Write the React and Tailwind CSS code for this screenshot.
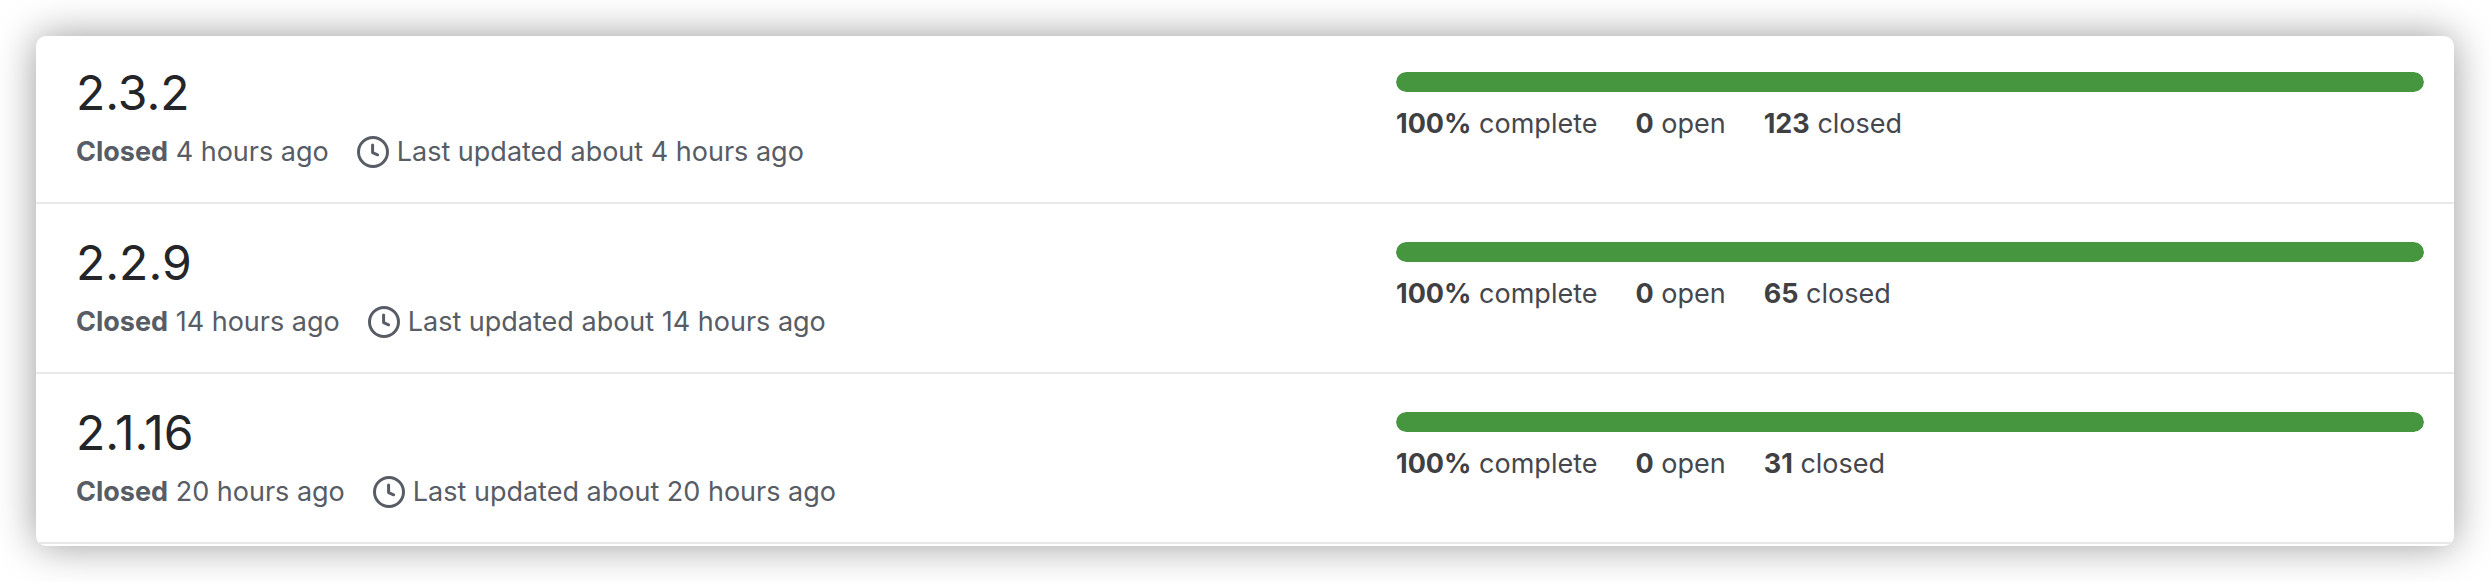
const milestones = [
  { title: "2.3.2", age: "4 hours ago", complete: 100, open: 0, closed: 123 },
  { title: "2.2.9", age: "14 hours ago", complete: 100, open: 0, closed: 65 },
  { title: "2.1.16", age: "20 hours ago", complete: 100, open: 0, closed: 31 },
];

function ClockIcon() {
  return (
    <svg viewBox="0 0 32 32" className="size-8 shrink-0" fill="none" stroke="currentColor" aria-hidden="true">
      <circle cx="16" cy="16" r="14.5" strokeWidth="3" />
      <path d="M15.6 9v7.6l5 2.2" strokeWidth="3" strokeLinecap="round" strokeLinejoin="round" />
    </svg>
  );
}

function Stat({ value, label }) {
  return (
    <span className="whitespace-nowrap">
      <strong className="font-bold text-[#3f4043]">{value}</strong> {label}
    </span>
  );
}

function Milestone({ title, age, complete, open, closed }) {
  return (
    <li className="grid grid-cols-[1320fr_1028fr] border-b-2 border-[#e8e8e8] pt-[34px] pr-[30px] pb-8 pl-10 first:pt-8">
      <div>
        <h2 className="h-[50px] text-[48px] leading-[50px] text-[#242528]">{title}</h2>
        <div className="mt-4 flex h-9 items-center gap-7 text-[27px] leading-9 text-[#575c65]">
          <span className="whitespace-nowrap">
            <strong className="font-bold">Closed</strong> {age}
          </span>
          <span className="flex items-center gap-2 whitespace-nowrap">
            <ClockIcon />
            Last updated about {age}
          </span>
        </div>
      </div>
      <div className="pt-1">
        <div
          role="progressbar"
          aria-label={`${title} progress`}
          aria-valuenow={complete}
          className="h-5 overflow-hidden rounded-full bg-[#eaecef]"
        >
          <div className="h-full rounded-full bg-[#46963f]" style={{ width: `${complete}%` }} />
        </div>
        <div className="mt-3.5 flex gap-[38px] text-[27px] leading-9 text-[#46474c]">
          <Stat value={`${complete}%`} label="complete" />
          <Stat value={open} label="open" />
          <Stat value={closed} label="closed" />
        </div>
      </div>
    </li>
  );
}

export default function App() {
  return (
    <main className="bg-white p-9 font-['Inter',sans-serif]">
      <ul className="overflow-hidden rounded-[10px] bg-white pb-0.5 shadow-[0_0_40px_rgba(0,0,0,0.4)]">
        {milestones.map((milestone) => (
          <Milestone key={milestone.title} {...milestone} />
        ))}
      </ul>
    </main>
  );
}
